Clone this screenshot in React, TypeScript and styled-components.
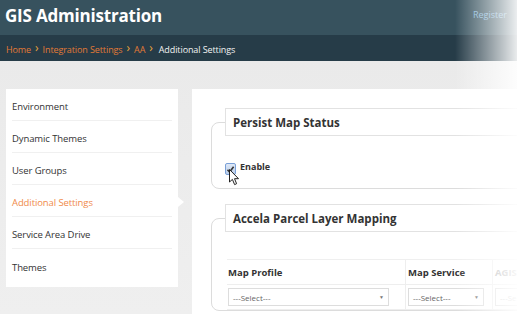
import * as React from 'react';
import styled, { createGlobalStyle } from 'styled-components';

const GlobalStyle = createGlobalStyle`
  html, body {
    margin: 0;
    padding: 0;
    background: #ececec;
    font-family: "Open Sans", "Liberation Sans", sans-serif;
    overflow: hidden;
  }
`;

const navItems = [
  'Environment',
  'Dynamic Themes',
  'User Groups',
  'Additional Settings',
  'Service Area Drive',
  'Themes',
];

const crumbs = ['Home', 'Integration Settings', 'AA'];

export const App: React.FC = () => {
  return (
    <Page>
      <GlobalStyle />
      <Header>
        <Title>GIS Administration</Title>
        <TopLink>Register</TopLink>
      </Header>
      <Breadcrumb>
        {crumbs.map((c) => (
          <React.Fragment key={c}>
            <CrumbLink>{c}</CrumbLink>
            <Chevron>&#8250;</Chevron>
          </React.Fragment>
        ))}
        <CrumbCurrent>Additional Settings</CrumbCurrent>
      </Breadcrumb>
      <Body>
        <Sidebar>
          {navItems.map((item) => (
            <NavItem key={item} $active={item === 'Additional Settings'}>
              {item}
              {item === 'Additional Settings' && <Pointer />}
            </NavItem>
          ))}
        </Sidebar>
        <Main>
          <FieldBox>
            <Legend>Persist Map Status</Legend>
            <CheckRow>
              <CheckBox>
                <svg width="9" height="9" viewBox="0 0 9 9">
                  <path d="M1.5 4.8 L3.6 7 L7.6 1.8" stroke="#333" strokeWidth="1.6" fill="none" />
                </svg>
                <Cursor width="11" height="17" viewBox="0 0 11 17">
                  <path d="M0.5 0.5 L0.5 13 L3.4 10.4 L5.6 15.6 L7.6 14.7 L5.5 9.7 L9.5 9.7 Z" fill="#fff" stroke="#222" strokeWidth="1" strokeLinejoin="round" />
                </Cursor>
              </CheckBox>
              <CheckLabel>Enable</CheckLabel>
            </CheckRow>
          </FieldBox>
          <FieldBox $second>
            <Legend>Accela Parcel Layer Mapping</Legend>
            <Table>
              <HeadCell $w={179}>Map Profile</HeadCell>
              <HeadCell $w={87}>Map Service</HeadCell>
              <HeadCell $w={80} $muted>AGIS</HeadCell>
              <Cell $w={179}>
                <Select $w={161}>---Select--- <Caret>▼</Caret></Select>
              </Cell>
              <Cell $w={87}>
                <Select $w={76}>---Select--- <Caret>▼</Caret></Select>
              </Cell>
              <Cell $w={80}>
                <Select $w={70} $muted>---Se</Select>
              </Cell>
            </Table>
          </FieldBox>
        </Main>
      </Body>
      <Fade />
    </Page>
  );
};

export default App;

const Page = styled.div`
  position: relative;
  width: 517px;
  height: 314px;
  overflow: hidden;
  display: flex;
  flex-direction: column;
`;

const Header = styled.div`
  height: 35px;
  background: #37525e;
  display: flex;
  align-items: center;
  justify-content: space-between;
  padding: 0 0 0 5px;
  flex-shrink: 0;
`;

const Title = styled.div`
  color: #fff;
  font-size: 17px;
  font-weight: 700;
  letter-spacing: -0.2px;
  margin-top: -4px;
`;

const TopLink = styled.div`
  color: #7fb2d8;
  font-size: 9px;
  margin-right: 10px;
  margin-top: -6px;
`;

const Breadcrumb = styled.div`
  height: 26px;
  background: #263c48;
  display: flex;
  align-items: center;
  padding: 2px 0 0 6px;
  font-size: 9px;
  letter-spacing: -0.1px;
  flex-shrink: 0;
  box-sizing: border-box;
`;

const CrumbLink = styled.span`
  color: #e27a36;
`;

const Chevron = styled.span`
  color: #e8a33c;
  font-size: 12px;
  margin: -3px 4px 0 4px;
`;

const CrumbCurrent = styled.span`
  color: #f2f2f2;
  margin-left: 2px;
`;

const Body = styled.div`
  flex: 1;
  display: flex;
  gap: 14px;
  padding: 28px 0 0 6px;
  background: linear-gradient(#eaeaea, #efefef);
`;

const Sidebar = styled.div`
  width: 160px;
  flex-shrink: 0;
  background: #fff;
  padding: 0 6px 6px 6px;
  align-self: flex-start;
`;

const NavItem = styled.div<{ $active?: boolean }>`
  position: relative;
  height: 32px;
  box-sizing: border-box;
  padding-top: 4px;
  display: flex;
  align-items: center;
  font-size: 9.5px;
  letter-spacing: -0.1px;
  color: ${(p) => (p.$active ? '#f08a4b' : '#333')};
  border-bottom: 1px solid #f0f0f0;

  &:last-child {
    border-bottom: none;
  }
`;

const Pointer = styled.span`
  position: absolute;
  right: -12px;
  top: 12px;
  width: 0;
  height: 0;
  border-top: 5px solid transparent;
  border-bottom: 5px solid transparent;
  border-left: 6px solid #fff;
`;

const Main = styled.div`
  width: 380px;
  flex-shrink: 0;
  background: #fff;
  padding: 33px 0 0 19px;
  display: flex;
  flex-direction: column;
`;

const FieldBox = styled.div<{ $second?: boolean }>`
  border: 1px solid #dcdcdc;
  border-radius: 8px;
  padding: 0 0 0 13px;
  margin-top: ${(p) => (p.$second ? '29px' : '0')};
  height: ${(p) => (p.$second ? 'auto' : '67px')};
  box-sizing: border-box;
`;

const Legend = styled.div`
  margin-top: -15px;
  height: 28px;
  box-sizing: border-box;
  background: #fff;
  border: 1px solid #e2e2e2;
  border-right: none;
  display: flex;
  align-items: center;
  padding-left: 7px;
  font-size: 11.5px;
  font-weight: 700;
  color: #333;
`;

const CheckRow = styled.div`
  display: flex;
  align-items: center;
  gap: 4px;
  margin-top: 27px;
`;

const CheckBox = styled.div`
  position: relative;
  width: 11px;
  height: 12px;
  box-sizing: border-box;
  border: 1px solid #7aa0d8;
  border-radius: 2px;
  background: linear-gradient(#dfe9f7, #b9cde9);
  display: flex;
  align-items: center;
  justify-content: center;
`;

const Cursor = styled.svg`
  position: absolute;
  left: 3px;
  top: 5px;
`;

const CheckLabel = styled.span`
  font-size: 9px;
  font-weight: 700;
  color: #333;
  margin-top: -6px;
`;

const Table = styled.div`
  display: flex;
  flex-wrap: wrap;
  width: 346px;
  margin-top: 27px;
  margin-left: 2px;
  border-top: 1px solid #efefef;
`;

const HeadCell = styled.div<{ $w: number; $muted?: boolean }>`
  width: ${(p) => p.$w}px;
  height: 25px;
  box-sizing: border-box;
  display: flex;
  align-items: center;
  padding-left: 1px;
  font-size: 9.5px;
  font-weight: 700;
  color: ${(p) => (p.$muted ? '#aaa' : '#333')};
  border-right: 1px solid #eeeeee;
  border-bottom: 1px solid #eeeeee;

  & + & {
    padding-left: 2px;
  }
`;

const Cell = styled.div<{ $w: number }>`
  width: ${(p) => p.$w}px;
  height: 25px;
  box-sizing: border-box;
  display: flex;
  align-items: center;
  padding-left: 1px;
  border-right: 1px solid #eeeeee;
  border-bottom: 1px solid #eeeeee;

  & + & {
    padding-left: 2px;
  }
`;

const Select = styled.div<{ $w: number; $muted?: boolean }>`
  width: ${(p) => p.$w}px;
  height: 18px;
  box-sizing: border-box;
  border: 1px solid #dddddd;
  display: flex;
  align-items: center;
  justify-content: space-between;
  padding: 0 4px;
  font-size: 8px;
  color: ${(p) => (p.$muted ? '#bbb' : '#666')};
`;

const Caret = styled.span`
  font-size: 5px;
  color: #777;
`;

const Fade = styled.div`
  position: absolute;
  top: 0;
  right: 0;
  width: 62px;
  height: 100%;
  background: linear-gradient(to right, rgba(255, 255, 255, 0), rgba(255, 255, 255, 0.9));
  pointer-events: none;
`;
